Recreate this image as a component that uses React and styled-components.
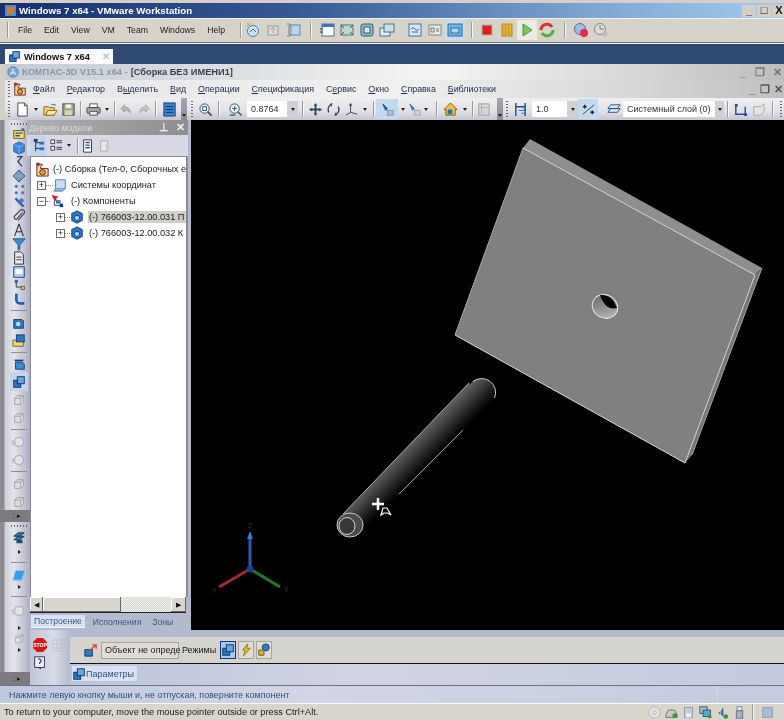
import React from "react";
import styled, { createGlobalStyle } from "styled-components";

const Global = createGlobalStyle`
  html, body { margin: 0; padding: 0; background: #d4d0c8; }
  * { box-sizing: border-box; }
`;

// small 16x16 drawings used by every toolbar
const art = {
  snap: <><circle cx="8" cy="9" r="5.5" fill="#cfe3f4" stroke="#4a7fb0" /><path d="M5 10l3-3 3 3" fill="none" stroke="#3b6ea0" /><path d="M2 1l3 3M5 1L2 4" stroke="#e08a30" /></>,
  snapOff: <><rect x="3" y="4" width="10" height="9" fill="#dcdcdc" stroke="#9a9a9a" /><path d="M5 8l3-3 3 3M8 5v6" fill="none" stroke="#a8a8a8" /></>,
  snapMgr: <><path d="M2 2h3v2H4v8h1v2H2" fill="none" stroke="#777" /><rect x="6" y="3" width="9" height="10" fill="#bcd4ea" stroke="#5d8ab5" /></>,
  win1: <><rect x="3" y="2" width="12" height="12" fill="#fff" stroke="#55717f" /><rect x="3" y="2" width="12" height="3" fill="#3c78b0" /><path d="M1 7h3M1 10h3" stroke="#333" /></>,
  win2: <><rect x="2" y="3" width="12" height="10" fill="#bcd8c8" stroke="#4c7a78" /><path d="M2 3l3 3M14 3l-3 3M2 13l3-3M14 13l-3-3" stroke="#2c5a68" /></>,
  win3: <><rect x="2" y="2" width="12" height="12" rx="2" fill="#8fb8c8" stroke="#38606e" /><rect x="5" y="5" width="6" height="6" fill="#d8e8ee" stroke="#38606e" /></>,
  win4: <><rect x="1" y="6" width="10" height="8" fill="#e4eef4" stroke="#55717f" /><rect x="5" y="2" width="10" height="8" fill="#cfe0ea" stroke="#55717f" /></>,
  wave: <><rect x="2" y="2" width="12" height="12" fill="#dbe8f2" stroke="#3c78b0" /><path d="M4 7q2-3 4 0t4 0M5 10h6" fill="none" stroke="#3a6a90" /></>,
  card: <><rect x="2" y="3" width="12" height="10" fill="#e8e8e4" stroke="#888" /><path d="M4 6h3v4H4zM9 7h3M9 9h3" fill="none" stroke="#777" /></>,
  blueWin: <><rect x="1" y="2" width="14" height="12" fill="#72b4e0" stroke="#2a6ca8" /><rect x="4" y="6" width="8" height="5" fill="#a8d8f0" stroke="#2a6ca8" /></>,
  stop: <rect x="3" y="3" width="10" height="10" fill="#e02020" stroke="#b0b0a0" />,
  pause: <><rect x="3" y="2" width="4" height="12" fill="#e8b020" stroke="#b88a10" /><rect x="9" y="2" width="4" height="12" fill="#e8b020" stroke="#b88a10" /></>,
  play: <path d="M4 2l9 6-9 6z" fill="#78c868" stroke="#4a9a40" />,
  reset: <><path d="M2 8a6 6 0 0 1 11-3" fill="none" stroke="#e03030" strokeWidth="3" /><path d="M14 8a6 6 0 0 1-11 3" fill="none" stroke="#50b040" strokeWidth="3" /></>,
  suspend: <><circle cx="7" cy="7" r="5.5" fill="#9ec0e0" stroke="#4a70a0" /><circle cx="11" cy="11" r="4" fill="#e03048" /></>,
  suspendOff: <><circle cx="7" cy="7" r="5.5" fill="#dcdcdc" stroke="#8a8a8a" /><path d="M7 3v4h4" fill="none" stroke="#777" /><circle cx="12" cy="12" r="2.5" fill="#bbb" /></>,
  doc: <><path d="M3 1h7l3 3v11H3z" fill="#fff" stroke="#444" /><path d="M10 1v3h3" fill="none" stroke="#444" /></>,
  open: <><path d="M1 14V5h5l1 1h5v8z" fill="#f0d070" stroke="#8a6a20" /><path d="M3 14l2-5h10l-3 5z" fill="#f8e8a8" stroke="#8a6a20" /><path d="M9 3q3-2 5 1" fill="none" stroke="#2a6ca8" /></>,
  save: <><rect x="2" y="2" width="12" height="12" fill="#a8a48c" stroke="#4a4a40" /><rect x="5" y="2.5" width="6" height="4" fill="#efefe6" /><rect x="4" y="9" width="8" height="5" fill="#d8d4b8" /></>,
  print: <><rect x="4" y="2" width="8" height="4" fill="#fff" stroke="#555" /><rect x="1" y="6" width="14" height="6" rx="1" fill="#a8a8a8" stroke="#444" /><rect x="4" y="10" width="8" height="4" fill="#eee" stroke="#555" /></>,
  undo: <path d="M6 3L2 7l4 4V8.500q4 0 6 3 0-6-6-6z" fill="#b8b8b8" stroke="#a0a0a0" />,
  redo: <path d="M10 3l4 4-4 4V8.500q-4 0-6 3 0-6 6-6z" fill="#c4c4c4" stroke="#a8a8a8" />,
  panel: <><rect x="2" y="1" width="12" height="14" fill="#3888d0" stroke="#1c3c70" /><path d="M4 5h8M4 8h8M4 11h8" stroke="#0c2c60" /></>,
  zoomBox: <><circle cx="7" cy="7" r="5" fill="#e8f0f8" stroke="#39506a" /><rect x="5" y="5" width="4" height="4" fill="none" stroke="#39506a" /><path d="M10.500 10.500l4 4" stroke="#39506a" strokeWidth="2" /></>,
  zoomIn: <><circle cx="7" cy="7" r="5" fill="#e8f0f8" stroke="#39506a" /><path d="M4.500 7h5M7 4.500v5" stroke="#39506a" /><path d="M2 14h6M10.500 10.500l4 4" stroke="#39506a" strokeWidth="1.500" /></>,
  pan: <path d="M8 1l2 3H9v3h3V6l3 2-3 2V9H9v3h1l-2 3-2-3h1V9H4v1L1 8l3-2v1h3V4H6z" fill="#33475e" />,
  rotate: <><path d="M3 11a6 6 0 0 1 2-8" fill="none" stroke="#33475e" strokeWidth="1.500" /><path d="M13 5a6 6 0 0 1-2 8" fill="none" stroke="#33475e" strokeWidth="1.500" /><path d="M7 1l-3 1 2 3M9 15l3-1-2-3" fill="#33475e" /></>,
  axes: <><path d="M7 2v9l-5 3M7 11l7 2" fill="none" stroke="#33475e" /><path d="M7 1l2 3H5z" fill="#33475e" /></>,
  pick: <><path d="M3 2l5 5-2 2z" fill="#2a5a90" stroke="#2a5a90" /><rect x="8" y="9" width="6" height="5" fill="#aac4d8" stroke="#7a9ab0" /></>,
  pickOff: <><path d="M3 2l5 5-2 2z" fill="#4a78a0" stroke="#4a78a0" /><rect x="8" y="9" width="6" height="5" fill="#d0d0d0" stroke="#aaa" /></>,
  home: <><path d="M8 1L1 8h2v6h10V8h2z" fill="#f0c040" stroke="#8a5a10" /><rect x="5" y="8" width="5" height="5" fill="#2a6cb0" /></>,
  frame: <><rect x="3" y="2" width="11" height="12" fill="#d8d8d8" stroke="#a0a0a0" /><path d="M6 2v12M3 6h11" stroke="#b0b0b0" /></>,
  span: <><path d="M3 1v14M13 1v14M3 5h10" stroke="#2a4a80" strokeWidth="1.500" /><path d="M6 9h7l-2-2M13 12H9" fill="none" stroke="#1878c0" /></>,
  snapLine: <><path d="M2 13L14 3" stroke="#2a4a80" /><path d="M4 3v4M2 5h4M12 9v4M10 11h4" stroke="#223" strokeWidth="1.500" /></>,
  layer: <><path d="M5 3h10l-3 4H2zM5 7h10l-3 4H2z" fill="#dbe8f4" stroke="#2a4a90" /></>,
  poly: <><path d="M3 3v10h10V5" fill="none" stroke="#2a4a90" strokeWidth="1.500" /><path d="M2 2h3v3H2zM12 12h3v3h-3z" fill="#2a4a90" /></>,
  polyOff: <><path d="M3 5h7l4-3v8l-4 4H3z" fill="#e4e4e4" stroke="#aaa" /></>,
  edit: <><rect x="2" y="4" width="12" height="9" fill="#f8d860" stroke="#6a5a20" /><path d="M4 7h8M4 10h5" stroke="#2a5aa0" strokeWidth="1.500" /><path d="M10 2l4-1-1 4" fill="#2a6cc0" /></>,
  cube: <><path d="M8 1l6 3v8l-6 3-6-3V4z" fill="#3a88d8" stroke="#1c5ca0" /><path d="M2 4l6 3 6-3M8 7v8" fill="none" stroke="#86bcec" /></>,
  zig: <path d="M5 2h6L6 8l5 6" fill="none" stroke="#2c3c70" strokeWidth="1.500" />,
  diamond: <><path d="M8 1l7 7-7 7-7-7z" fill="#6aa0d8" stroke="#2c5a90" /><path d="M5 8h6" stroke="#d0a030" strokeWidth="2" /></>,
  dots: <><circle cx="4" cy="4" r="2" fill="#4c7ac0" /><circle cx="12" cy="4" r="2" fill="#4c7ac0" /><circle cx="4" cy="12" r="2" fill="#4c7ac0" /><circle cx="12" cy="12" r="2" fill="#4c7ac0" /></>,
  wrench: <><path d="M3 3l10 10" stroke="#3060c0" strokeWidth="3" /><path d="M9 3a3 3 0 0 1 4 4l-3 2-3-3z" fill="#4c7ac0" /></>,
  clip: <path d="M12 4L6 11a2 2 0 0 1-3-3l7-7a3 3 0 0 1 4 4l-7 8" fill="none" stroke="#445" strokeWidth="1.300" />,
  compass: <path d="M8 1L3 15M8 1l5 14M5 10h6" fill="none" stroke="#334" strokeWidth="1.300" />,
  funnel: <><path d="M1 2h14L9 9v5l-2 1V9z" fill="#3a8ccc" stroke="#1c5c90" /></>,
  sheet: <><path d="M3 1h7l3 3v11H3z" fill="#e8e8ee" stroke="#222" /><path d="M5 7h6M5 10h6" stroke="#333" /></>,
  screen: <><rect x="2" y="2" width="12" height="12" fill="#b0d0f0" stroke="#1c3c70" /><rect x="4" y="5" width="8" height="5" fill="#fff" /></>,
  tree: <><path d="M4 2v8h6" fill="none" stroke="#223" /><rect x="2" y="1" width="4" height="4" fill="#2a6cb0" /><rect x="10" y="9" width="4" height="4" fill="#e0c050" stroke="#555" /></>,
  curve: <path d="M5 2v7a4 4 0 0 0 4 4h5" fill="none" stroke="#1c60b0" strokeWidth="3" />,
  cam: <><path d="M2 4h11v10H2z" fill="#2a78c0" stroke="#123a70" /><circle cx="7" cy="9" r="2.500" fill="#bfe0f8" /><path d="M13 1l2 2-2 2-2-2z" fill="#f4d440" /></>,
  folderCube: <><path d="M1 14V7h12v7z" fill="#f0d870" stroke="#6a5a20" /><rect x="5" y="1" width="9" height="8" fill="#2a78c0" stroke="#123a70" /></>,
  box: <><path d="M3 3h10v2H3z" fill="#123a70" /><path d="M4 6h8l2 2v6H4z" fill="#3a8ccc" stroke="#123a70" /></>,
  cubes: <><rect x="2" y="6" width="8" height="8" fill="#2a78c0" stroke="#0c2c60" /><rect x="6" y="2" width="8" height="8" fill="#60a8e0" stroke="#0c2c60" /></>,
  ghost: <><path d="M3 6h7l3-3v7l-3 3H3z" fill="#dedede" stroke="#a0a0a0" /><path d="M3 6l3-3h7M10 6v7" fill="none" stroke="#a0a0a0" /></>,
  ghostRound: <><rect x="3" y="3" width="10" height="10" rx="4" fill="#e2e2e2" stroke="#a0a0a0" /><path d="M1 6v6" stroke="#a0a0a0" /></>,
  layers: <><path d="M2 6l5-4h7l-5 4zM2 10l5-4h7l-5 4z" fill="#2a80a0" stroke="#103850" /><path d="M5 10h7v4H5z" fill="#1a5070" /></>,
  prism: <path d="M4 4h11l-4 11H1z" fill="#3a9cf0" stroke="#90c8f8" />,
  arrowDoc: <><path d="M2 7h8v7H2z" fill="#3a78c0" stroke="#123a70" /><path d="M7 8l7-6M10 2h4v4" fill="none" stroke="#d05030" strokeWidth="1.500" /></>,
  bolt: <path d="M10 1L4 8h3l-2 7 8-9H9z" fill="#e8c020" stroke="#8a7a10" />,
  gears: <><circle cx="10" cy="5" r="4" fill="#3a78c0" stroke="#123a70" /><path d="M2 8h6v6H2z" fill="#d8a840" stroke="#6a5a20" /></>,
  help: <><rect x="2" y="1" width="11" height="12" fill="#f0f4ff" stroke="#223" /><path d="M6 4q2-1.500 3 .5T7.500 8v1" fill="none" stroke="#1c3c90" strokeWidth="1.300" /><path d="M6 13l3 2v-2" fill="#223" /></>,
  grid: <path d="M1 1h14v14H1zM6 1v14M11 1v14M1 6h14M1 11h14" fill="none" stroke="#c0c0c4" />,
  disc: <><circle cx="8" cy="8" r="7" fill="#e4e4e4" stroke="#aaa" /><circle cx="8" cy="8" r="2" fill="#fff" stroke="#999" /></>,
  logo: <><circle cx="8" cy="8" r="7" fill="#7ea8d0" stroke="#4a78a8" /><path d="M8 3v5l4 3M8 8l-4 3" fill="none" stroke="#e8eef4" strokeWidth="1.500" /></>,
  hdd: <><path d="M1 11l3-6h8l3 6v3H1z" fill="#c8ccc8" stroke="#667" /><circle cx="12" cy="12" r="3" fill="#3a9a3a" /></>,
  floppy: <><rect x="3" y="2" width="10" height="12" fill="#c4ccd8" stroke="#8a94a4" /><rect x="5" y="9" width="6" height="5" fill="#eef" /></>,
  net: <><rect x="1" y="1" width="9" height="8" fill="#a8c0d0" stroke="#345" /><rect x="5" y="5" width="9" height="8" fill="#58a8d0" stroke="#345" /><circle cx="13" cy="13" r="2.500" fill="#3a9a3a" /></>,
  sound: <><path d="M3 9l6-7v11z" fill="#2c5c98" /><path d="M6 13V4" stroke="#e8e8e8" /><circle cx="12" cy="13" r="3" fill="#3a9a3a" /></>,
  usb: <><rect x="5" y="1" width="6" height="5" fill="#e8ecf0" stroke="#778" /><rect x="4" y="6" width="8" height="9" fill="#a8b4c4" stroke="#667" /></>,
  msg: <rect x="2" y="2" width="12" height="12" fill="#a8bcd4" stroke="#8a9ab0" />,
  comp: <><path d="M8 1l6 3v8l-6 3-6-3V4z" fill="#2c72c8" stroke="#103a7a" /><circle cx="8" cy="9" r="3" fill="#9fd4f4" stroke="#103a7a" /></>,
  coord: <><rect x="3" y="2" width="11" height="10" fill="#c8dcf0" stroke="#4a78b0" /><path d="M3 12l-2 3h10l3-3" fill="#9ab8d8" stroke="#4a78b0" /></>,
  group: <><path d="M2 1l8 2-3 2 1 4-4-3z" fill="#d02030" /><rect x="7" y="7" width="5" height="4" fill="#2c72c8" /><rect x="11" y="11" width="4" height="4" fill="#103a7a" /><path d="M5 7v6h6" fill="none" stroke="#334" /></>,
  asm: <><path d="M2 1l6 2-2 2v2h8v8H2z" fill="#f0d8a0" stroke="#6a2020" /><circle cx="8" cy="11" r="3" fill="#e8a020" stroke="#6a2020" /><path d="M1 1l5 1-3 3z" fill="#c02020" /></>,
  treeMode: <><path d="M5 1v13M5 5h5M5 11h5" stroke="#223" /><rect x="3" y="1" width="4" height="3" fill="#334" /><rect x="9" y="4" width="5" height="3" fill="#2c72c8" /><rect x="9" y="10" width="5" height="3" fill="#2c72c8" /></>,
  listMode: <><path d="M2 2h4v4H2zM2 9h4v4H2z" fill="#fff" stroke="#334" /><path d="M8 3h6M8 5h6M8 10h6M8 12h6" stroke="#334" /></>,
  struct: <><path d="M3 1h9v14H3z" fill="#fff" stroke="#223" /><path d="M5 4h5M5 7h5M5 10h5" stroke="#2a5a90" strokeWidth="1.500" /></>,
  structOff: <><path d="M3 2h8v12H3z" fill="#e8e8e8" stroke="#aaa" /><path d="M9 5l5 4-5 4z" fill="#ccc" /></>,
};

const IconSvg = styled.svg`
  display: block;
  flex: none;
`;

const Icon = ({ name, size = 16 }) => (
  <IconSvg viewBox="0 0 16 16" width={size} height={size}>
    {art[name]}
  </IconSvg>
);

const Page = styled.div`
  width: 784px;
  height: 720px;
  overflow: hidden;
  display: flex;
  flex-direction: column;
  background: #d4d0c8;
  font-family: "Liberation Sans", Arial, sans-serif;
  filter: blur(0.3px);
`;

/* ---- VMware chrome ---- */
const VmTitle = styled.div`
  height: 15px;
  margin-top: 3px;
  flex: none;
  display: flex;
  align-items: center;
  padding-left: 5px;
  background: linear-gradient(90deg, #14306e 0%, #3a5c98 40%, #7ea4d2 75%, #a6caf0 100%);
  color: #fff;
  font-size: 9.700px;
  font-weight: bold;
`;

const VmLogo = styled.span`
  width: 11px;
  height: 11px;
  margin-right: 3px;
  border: 2px solid #5a8ab0;
  background: #d87a30;
`;

const WinButtons = styled.div`
  margin-left: auto;
  margin-right: ${(p) => p.$mr || 0}px;
  display: flex;
  gap: ${(p) => p.$gap || 1}px;
`;

const WinButton = styled.span`
  width: ${(p) => p.$w || 14}px;
  height: 12px;
  display: flex;
  align-items: center;
  justify-content: center;
  background: ${(p) => p.$bg || "#d4d0c8"};
  color: ${(p) => p.$fg || "#111"};
  font-size: 11px;
  font-weight: bold;
  line-height: 1;
`;

const VmBar = styled.div`
  height: 25px;
  flex: none;
  display: flex;
  align-items: center;
  padding-left: 6px;
  background: #d6d3ca;
  border-bottom: 1px solid #77756e;
  box-shadow: inset 0 1px 0 #f4f2ec;
  color: #222;
  font-size: 8.700px;
`;

const VmMenu = styled.div`
  width: 219px;
  margin-left: 9px;
  flex: none;
  display: flex;
  gap: 12px;
`;

const Sep = styled.span`
  flex: none;
  width: ${(p) => p.$w || 6}px;
  height: 16px;
  display: flex;
  justify-content: center;
  &::before {
    content: "";
    width: 1px;
    background: #9c9a94;
    box-shadow: 1px 0 0 #f6f6f2;
  }
`;

const Slot = styled.span`
  flex: none;
  width: ${(p) => p.$w || 20}px;
  height: ${(p) => p.$h || 20}px;
  display: flex;
  align-items: center;
  justify-content: center;
  background: ${(p) => (p.$on ? p.$on : "transparent")};
`;

const VmTabs = styled.div`
  height: 21px;
  flex: none;
  padding: 5px 0 0 5px;
  background: #2e4a72;
  border-top: 1px solid #f0f0f0;
`;

const VmTab = styled.div`
  width: 108px;
  height: 15px;
  display: flex;
  align-items: center;
  gap: 3px;
  padding-left: 3px;
  background: #fbfbfb;
  font-size: 9.200px;
  font-weight: bold;
  white-space: nowrap;
  color: #111;
`;

const TabClose = styled.span`
  margin-left: auto;
  margin-right: 3px;
  color: #c4c4c4;
  font-size: 10px;
`;

const VmStatus = styled.div`
  height: 17px;
  flex: none;
  display: flex;
  align-items: center;
  padding-left: 4px;
  background: #d8d6cc;
  border-top: 1px solid #fbfbf6;
  color: #1a1a1a;
  font-size: 9.200px;
`;

const TrayIcons = styled.div`
  margin-left: auto;
  display: flex;
  align-items: center;
`;

/* ---- KOMPAS window ---- */
const Window = styled.div`
  flex: 1;
  min-height: 0;
  margin-left: 5px;
  display: flex;
  flex-direction: column;
`;

const KTitle = styled.div`
  height: 16px;
  flex: none;
  display: flex;
  align-items: center;
  padding-left: 2px;
  background: linear-gradient(90deg, #c4ccd6 0%, #d8dce0 25%, #f4f4f4 55%, #d8d8d8 80%, #bdbdbd 100%);
  color: #8e949c;
  font-size: 9.250px;
  font-weight: bold;
  gap: 3px;
  b {
    color: #3a3f4c;
  }
`;

const KMenu = styled.div`
  height: 18px;
  flex: none;
  display: flex;
  align-items: center;
  background: linear-gradient(90deg, #e6e6e8 0%, #f0f0f0 50%, #d8d8d8 80%, #c0c0c0 100%);
  color: #24324e;
  font-size: 8.900px;
`;

const KMenuList = styled.div`
  margin-left: 6px;
  display: flex;
  gap: 12px;
  u {
    text-decoration: underline;
  }
`;

const KToolbar = styled.div`
  height: 22px;
  flex: none;
  display: flex;
  align-items: center;
  background: linear-gradient(180deg, #f0f0f2 0%, #e0e0e6 60%, #c6c6d2 100%);
`;

const Grip = styled.span`
  flex: none;
  width: ${(p) => p.$w || 8}px;
  height: 16px;
  display: flex;
  justify-content: center;
  &::before {
    content: "";
    width: 2px;
    background: repeating-linear-gradient(180deg, #6a6a70 0 1px, transparent 1px 3px);
  }
`;

const Band = styled.span`
  flex: none;
  width: 6px;
  height: 22px;
  padding-bottom: 3px;
  display: flex;
  align-items: flex-end;
  justify-content: center;
  background: linear-gradient(180deg, #a8a8b4, #8a8a94);
  &::before {
    content: "";
    border-top: 3px solid #222;
    border-left: 2px solid transparent;
    border-right: 2px solid transparent;
  }
`;

const Arrow = styled.span`
  flex: none;
  width: ${(p) => p.$w || 10}px;
  display: flex;
  justify-content: center;
  &::before {
    content: "";
    border-top: 3px solid #222;
    border-left: 2.500px solid transparent;
    border-right: 2.500px solid transparent;
  }
`;

const Field = styled.span`
  flex: none;
  width: ${(p) => p.$w}px;
  height: 16px;
  padding-left: 4px;
  display: flex;
  align-items: center;
  white-space: nowrap;
  background: #fff;
  color: #333;
  font-size: 9px;
`;

const FieldDrop = styled(Arrow)`
  height: 16px;
  align-items: center;
  background: #d0d0d4;
`;

const Gap = styled.span`
  flex: none;
  width: ${(p) => p.$w}px;
`;

const Body = styled.div`
  flex: 1;
  min-height: 0;
  display: flex;
  margin-left: -5px;
`;

const SideTools = styled.div`
  width: 30px;
  flex: none;
  display: flex;
  flex-direction: column;
  align-items: center;
  padding-left: 8px;
  background: linear-gradient(90deg, #8a8a90 0, #8a8a90 4px, #d0d0da 5px, #e4e4ea 14px, #c0c0d0 25px, #a8aec4 30px);
`;

const SideItem = styled.span`
  flex: none;
  width: 18px;
  height: ${(p) => p.$h}px;
  display: flex;
  align-items: center;
  justify-content: center;
  background: ${(p) => (p.$on ? "#c4d4ec" : "transparent")};
`;

const SideSep = styled.span`
  flex: none;
  height: ${(p) => p.$h}px;
  width: 16px;
  display: flex;
  align-items: center;
  &::before {
    content: "";
    flex: 1;
    height: 1px;
    background: #8e8e9a;
  }
`;

const SideBand = styled.span`
  flex: none;
  height: ${(p) => p.$h}px;
  width: 30px;
  margin-left: -8px;
  padding-left: 13px;
  display: flex;
  align-items: center;
  background: #7c7c80;
  color: #111;
  font-size: 7px;
`;

const SideDots = styled.span`
  flex: none;
  height: ${(p) => p.$h}px;
  width: 16px;
  display: flex;
  align-items: center;
  &::before {
    content: "";
    flex: 1;
    height: 2px;
    background: repeating-linear-gradient(90deg, #666 0 1px, transparent 1px 3px);
  }
`;

const SideArrow = styled(Arrow)`
  height: ${(p) => p.$h}px;
  align-items: center;
  &::before {
    border-top: 2.500px solid transparent;
    border-bottom: 2.500px solid transparent;
    border-left: 3px solid #222;
    border-right: 0;
  }
`;

const Right = styled.div`
  flex: 1;
  min-width: 0;
  display: flex;
  flex-direction: column;
`;

const Work = styled.div`
  height: 510px;
  flex: none;
  display: flex;
  background: #b4bace;
`;

const TreePanel = styled.div`
  width: 158px;
  flex: none;
  display: flex;
  flex-direction: column;
`;

const PanelHead = styled.div`
  height: 15px;
  flex: none;
  margin-left: -3px;
  display: flex;
  align-items: center;
  padding: 0 1px 0 2px;
  background: linear-gradient(90deg, #b0b0b0, #8e8e8e);
  color: #dcdcdc;
  font-size: 8.800px;
`;

const PanelTool = styled.div`
  height: 21px;
  flex: none;
  margin-left: -3px;
  display: flex;
  align-items: center;
  padding-left: 3px;
  background: #d9d9e6;
`;

const Tree = styled.div`
  flex: 1;
  min-height: 0;
  padding-top: 4px;
  background: #fff;
  border-left: 1px solid #8a8a96;
  border-top: 1px solid #8a8a96;
  border-right: 2px solid #8a8a96;
  overflow: hidden;
  font-size: 9.200px;
  color: #1b1b1b;
`;

const Row = styled.div`
  height: 16px;
  display: flex;
  align-items: center;
  padding-left: ${(p) => p.$indent}px;
  white-space: nowrap;
`;

const Expander = styled.span`
  flex: none;
  width: 9px;
  height: 9px;
  border: 1px solid #6e6e6e;
  background: #fff;
  display: flex;
  align-items: center;
  justify-content: center;
  color: #111;
  font-size: 9px;
  line-height: 1;
`;

const Dash = styled.span`
  flex: none;
  width: ${(p) => p.$w}px;
  border-top: 1px dotted #888;
`;

const RowText = styled.span`
  margin-left: ${(p) => p.$ml || 3}px;
  padding: 1px 0 1px 1px;
  flex: ${(p) => (p.$on ? 1 : "none")};
  background: ${(p) => (p.$on ? "#cfcfc8" : "transparent")};
`;

const Scroll = styled.div`
  height: 16px;
  flex: none;
  display: flex;
  background: repeating-conic-gradient(#f4f4f0 0 25%, #d0d0cc 0 50%) 0 0 / 2px 2px;
  border-bottom: 1px solid #222;
  margin-right: 2px;
`;

const ScrollBtn = styled.span`
  flex: none;
  width: ${(p) => p.$w}px;
  display: flex;
  align-items: center;
  justify-content: center;
  background: #d8d6ce;
  box-shadow: inset -1px -1px 0 #666, inset 1px 1px 0 #fff;
  color: #111;
  font-size: 7px;
`;

const ScrollGap = styled.span`
  flex: 1;
`;

const TabRow = styled.div`
  height: 17px;
  flex: none;
  display: flex;
  align-items: center;
  padding-left: 1px;
  white-space: nowrap;
  color: #3e5680;
  font-size: 8.600px;
`;

const SheetTab = styled.span`
  padding: 1px 3px;
  margin-right: 5px;
  background: ${(p) => (p.$on ? "#d8e2f2" : "transparent")};
  border-bottom: ${(p) => (p.$on ? "1px solid #f2f6fc" : "0")};
`;

const Viewport = styled.div`
  flex: none;
  width: 593px;
  height: 510px;
  margin-left: 3px;
  background: #000;
`;

const Scene = styled.svg`
  display: block;
`;

const Props = styled.div`
  height: 55px;
  flex: none;
  display: flex;
  background: #b4bace;
`;

const PropSide = styled.div`
  width: 40px;
  flex: none;
  padding: 6px 0 0 1px;
  display: grid;
  grid-template-columns: 18px 18px;
  grid-auto-rows: 18px;
  background: linear-gradient(90deg, #c0c4d6, #d8dce8 60%, #b4bace);
`;

const PropMain = styled.div`
  flex: 1;
  display: flex;
  flex-direction: column;
  padding-top: 7px;
`;

const PropTop = styled.div`
  height: 27px;
  flex: none;
  display: flex;
  align-items: center;
  padding-left: 13px;
  background: #d4d3cd;
  border-bottom: 1px solid #111;
  font-size: 9px;
  color: #222;
`;

const ObjField = styled.span`
  width: 78px;
  height: 17px;
  margin: 0 3px;
  padding-left: 3px;
  display: flex;
  align-items: center;
  white-space: nowrap;
  border: 1px solid #a8a69c;
  background: #dedcd4;
`;

const ModeBtn = styled.span`
  flex: none;
  width: 16px;
  height: 18px;
  margin-left: ${(p) => p.$ml || 2}px;
  display: flex;
  align-items: center;
  justify-content: center;
  border: 1px solid ${(p) => (p.$on ? "#103a7a" : "#a8a69c")};
  background: ${(p) => (p.$on ? "#a8c8ec" : "#dedcd4")};
`;

const PropTabs = styled.div`
  flex: 1;
  padding: 2px 0 0 2px;
  background: linear-gradient(90deg, #bcc4da, #d0d4e4 40%, #c4cadc);
  display: flex;
  align-items: flex-start;
`;

const PropTab = styled.span`
  display: flex;
  align-items: center;
  height: 15px;
  padding-right: 3px;
  background: #d8e2f2;
  color: #33507c;
  font-size: 9px;
`;

const Hint = styled.div`
  height: 18px;
  flex: none;
  margin-left: -5px;
  display: flex;
  align-items: center;
  padding-left: 9px;
  border-top: 1px solid #6e7488;
  background: linear-gradient(90deg, #c0c8de, #d2d6e6 40%, #c6cce0 91.400%, #eeeef4 91.400%, #c6cce0 91.600%);
  color: #33507c;
  font-size: 9px;
`;

const sideItems = [
  ["dots", 7], ["edit", 14], ["cube", 14], ["zig", 13], ["diamond", 15], ["dots4", 13], ["wrench", 13],
  ["clip", 14], ["compass", 14], ["funnel", 14], ["sheet", 14], ["screen", 14], ["tree", 13], ["curve", 14],
  ["sep", 8], ["cam", 18], ["folderCube", 17], ["sep", 6], ["box", 17], ["cubes", 19, "on"],
  ["ghost", 18], ["ghost", 17], ["sep", 7], ["ghostRound", 18], ["ghostRound", 17], ["sep", 7],
  ["ghost", 18], ["ghost", 17], ["band", 12], ["dots", 8], ["layers", 16], ["arrow", 12], ["sep", 8],
  ["prism", 16], ["arrow", 10], ["sep", 8], ["ghostRound", 22], ["arrow", 11], ["ghost", 12], ["arrow", 10],
  ["gap", 17], ["band", 13],
];

const SideEntry = ({ item }) => {
  const [kind, h, on] = item;
  if (kind === "dots") return <SideDots $h={h} />;
  if (kind === "sep") return <SideSep $h={h} />;
  if (kind === "arrow") return <SideArrow $h={h} />;
  if (kind === "band") return <SideBand $h={h}>: ▸</SideBand>;
  if (kind === "gap") return <SideItem $h={h} />;
  return (
    <SideItem $h={h} $on={on}>
      <Icon name={kind === "dots4" ? "dots" : kind} size={Math.min(14, h)} />
    </SideItem>
  );
};

const vmMenu = ["File", "Edit", "View", "VM", "Team", "Windows", "Help"];

const kMenu = [
  <><u>Ф</u>айл</>,
  <><u>Р</u>едактор</>,
  <>В<u>ы</u>делить</>,
  <><u>В</u>ид</>,
  <><u>О</u>перации</>,
  <><u>С</u>пецификация</>,
  <>С<u>е</u>рвис</>,
  <><u>О</u>кно</>,
  <><u>С</u>правка</>,
  <><u>Б</u>иблиотеки</>,
];

// kind, width, extra
const kTools = [
  ["gap", 1], ["grip", 5], ["gap", 2],
  ["doc", 18], ["arrow", 10], ["open", 18], ["save", 18], ["sep", 6], ["print", 20], ["arrow", 8], ["sep", 6],
  ["undo", 18], ["redo", 16], ["sep", 9], ["panel", 18], ["gap", 3], ["band"], ["grip", 10],
  ["zoomBox", 16], ["sep", 10], ["zoomIn", 24], ["field", 40, "0.8764"], ["drop", 11], ["sep", 8],
  ["pan", 18], ["rotate", 18], ["axes", 18], ["arrow", 10], ["sep", 6], ["pick", 22, "on"], ["arrow", 10],
  ["pickOff", 12], ["arrow", 12], ["sep", 8], ["home", 20], ["arrow", 10], ["sep", 4], ["frame", 18],
  ["gap", 5], ["band"], ["grip", 8], ["span", 18], ["gap", 3], ["field", 35, "1.0"], ["drop", 11],
  ["snapLine", 20, "on"], ["gap", 6], ["layer", 18], ["gap", 1], ["field", 92, "Системный слой (0)"], ["drop", 9],
  ["sep", 7], ["poly", 18], ["polyOff", 18], ["sep", 10], ["grip", 7],
];

const ToolEntry = ({ tool }) => {
  const [kind, w, extra] = tool;
  if (kind === "gap") return <Gap $w={w} />;
  if (kind === "grip") return <Grip $w={w} />;
  if (kind === "sep") return <Sep $w={w} />;
  if (kind === "band") return <Band />;
  if (kind === "arrow") return <Arrow $w={w} />;
  if (kind === "field") return <Field $w={w}>{extra}</Field>;
  if (kind === "drop") return <FieldDrop $w={w} />;
  return (
    <Slot $w={w} $on={extra ? "#c4d8ee" : ""}>
      <Icon name={kind} size={15} />
    </Slot>
  );
};

const vmTools = [
  ["snap"], ["snapOff"], ["snapMgr"], ["sep", 14], ["win1"], ["win2"], ["win3"], ["win4"], ["gap", 8],
  ["wave"], ["card"], ["blueWin", "#c8dcf0"], ["sep", 12],
  ["stop"], ["pause"], ["play", "#ecebe4"], ["reset"], ["sep", 14], ["suspend"], ["suspendOff"],
];

const Model = () => (
  <Scene width="593" height="510" viewBox="191 120 593 510">
    <defs>
      <linearGradient id="pin" gradientUnits="userSpaceOnUse" x1="406" y1="449" x2="425" y2="468">
        <stop offset="0" stopColor="#5c5c5c" />
        <stop offset="0.5" stopColor="#303030" />
        <stop offset="1" stopColor="#000" />
      </linearGradient>
      <linearGradient id="bore" x1="0" y1="0" x2="1" y2="1">
        <stop offset="0" stopColor="#606060" />
        <stop offset="1" stopColor="#c0c0c0" />
      </linearGradient>
    </defs>

    <polygon points="530,139 762,268 755,275 523,148" fill="#8e8e8e" />
    <polygon points="523,148 755,275 685,463 455,335" fill="#808080" />
    <polygon points="762,268 692,455 685,463 755,275" fill="#767676" />
    <path d="M523 148L755 275M755 275L685 463M455 335L685 463" stroke="#d8d8d8" fill="none" />
    <path d="M523 148L455 335" stroke="#a8a8a8" fill="none" />
    <path d="M762 268L692 455" stroke="#a0a0a0" fill="none" />
    <ellipse cx="605" cy="306.500" rx="13" ry="11.500" transform="rotate(28 605 306.500)" fill="url(#bore)" stroke="#e8e8e8" />
    <path d="M600 295Q612 294 617 308Q608 310 604 303Q601 299 600 295z" fill="#000" />

    <polygon points="343,514 469,383 491,403 360,535" fill="url(#pin)" />
    <circle cx="481" cy="393" r="14" fill="url(#pin)" />
    <path d="M343 514L469 383" stroke="#a8a8a8" fill="none" />
    <path d="M399 494L463 430" stroke="#a0a0a0" fill="none" />
    <path d="M473 381.500A14 14 0 0 1 494.500 398" stroke="#c8d4d4" fill="none" />
    <ellipse cx="350" cy="525" rx="13" ry="12" fill="#4a4a4a" stroke="#b8d0d0" />
    <ellipse cx="347" cy="526" rx="8" ry="8.500" fill="#383838" stroke="#d0d0d0" />

    <path d="M378 498v12M372 504h12" stroke="#fff" strokeWidth="2.500" />
    <path d="M381 515l2-7h4l4 7-3-2h-4z" fill="#000" stroke="#fff" strokeWidth="1.200" />

    <path d="M250 569V536" stroke="#2a5aa8" strokeWidth="3" />
    <path d="M250 531l3 8h-6z" fill="#3a78c8" />
    <path d="M250 569L219 587" stroke="#a02838" strokeWidth="3" />
    <path d="M250 569L280 587" stroke="#1c7a30" strokeWidth="3" />
    <circle cx="250" cy="569" r="3.500" fill="#1c3c98" />
    <text x="248" y="528" fill="#333" fontSize="7">Z</text>
    <text x="212" y="593" fill="#4a2020" fontSize="7">X</text>
    <text x="284" y="592" fill="#333" fontSize="7">Y</text>
  </Scene>
);

export default function App() {
  return (
    <Page>
      <Global />
      <VmTitle>
        <VmLogo />
        Windows 7 x64 - VMware Workstation
        <WinButtons $mr={-2}>
          <WinButton>_</WinButton>
          <WinButton>□</WinButton>
          <WinButton>X</WinButton>
        </WinButtons>
      </VmTitle>
      <VmBar>
        <Sep $w={3} />
        <VmMenu>
          {vmMenu.map((label) => (
            <span key={label}>{label}</span>
          ))}
        </VmMenu>
        <Sep />
        {vmTools.map((t, i) =>
          t[0] === "sep" ? (
            <Sep key={i} $w={t[1]} />
          ) : t[0] === "gap" ? (
            <Gap key={i} $w={t[1]} />
          ) : (
            <Slot key={i} $on={t[1]}>
              <Icon name={t[0]} />
            </Slot>
          )
        )}
      </VmBar>
      <VmTabs>
        <VmTab>
          <Icon name="cubes" size={13} />
          Windows 7 x64
          <TabClose>✕</TabClose>
        </VmTab>
      </VmTabs>

      <Window>
        <KTitle>
          <Icon name="logo" size={12} />
          КОМПАС-3D V15.1 x64 - <b>[Сборка БЕЗ ИМЕНИ1]</b>
          <WinButtons $gap={3}>
            <WinButton $bg="transparent" $fg="#777">_</WinButton>
            <WinButton $bg="transparent" $fg="#777">❐</WinButton>
            <WinButton $bg="transparent" $fg="#777">✕</WinButton>
          </WinButtons>
        </KTitle>
        <KMenu>
          <Gap $w={1} />
          <Grip $w={5} />
          <Gap $w={2} />
          <Icon name="asm" size={14} />
          <KMenuList>
            {kMenu.map((label, i) => (
              <span key={i}>{label}</span>
            ))}
          </KMenuList>
          <WinButtons>
            <WinButton $w={12} $bg="transparent" $fg="#555">_</WinButton>
            <WinButton $w={12} $bg="transparent" $fg="#555">❐</WinButton>
            <WinButton $w={12} $bg="transparent" $fg="#555">✕</WinButton>
          </WinButtons>
        </KMenu>
        <KToolbar>
          {kTools.map((t, i) => (
            <ToolEntry key={i} tool={t} />
          ))}
        </KToolbar>

        <Body>
          <SideTools>
            {sideItems.map((it, i) => (
              <SideEntry key={i} item={it} />
            ))}
          </SideTools>
          <Right>
            <Work>
              <TreePanel>
                <PanelHead>
                  Дерево модели
                  <WinButtons $gap={2}>
                    <WinButton $bg="transparent" $fg="#eee">⊥</WinButton>
                    <WinButton $bg="transparent" $fg="#eee">✕</WinButton>
                  </WinButtons>
                </PanelHead>
                <PanelTool>
                  <Slot $w={16} $on="#c4d4ec"><Icon name="treeMode" size={15} /></Slot>
                  <Gap $w={3} />
                  <Icon name="listMode" size={15} />
                  <Arrow $w={9} />
                  <Sep $w={8} />
                  <Icon name="struct" size={14} />
                  <Gap $w={3} />
                  <Icon name="structOff" size={14} />
                </PanelTool>
                <Tree>
                  <Row $indent={4}>
                    <Icon name="asm" size={15} />
                    <RowText $ml={2}>(-) Сборка (Тел-0, Сборочных е</RowText>
                  </Row>
                  <Row $indent={6}>
                    <Expander>+</Expander>
                    <Dash $w={7} />
                    <Icon name="coord" size={14} />
                    <RowText $ml={3}>Системы координат</RowText>
                  </Row>
                  <Row $indent={6}>
                    <Expander>−</Expander>
                    <Dash $w={4} />
                    <Icon name="group" size={14} />
                    <RowText $ml={6}>(-) Компоненты</RowText>
                  </Row>
                  <Row $indent={25}>
                    <Expander>+</Expander>
                    <Dash $w={5} />
                    <Icon name="comp" size={14} />
                    <RowText $ml={4} $on>(-) 766003-12.00.031 П</RowText>
                  </Row>
                  <Row $indent={25}>
                    <Expander>+</Expander>
                    <Dash $w={5} />
                    <Icon name="comp" size={14} />
                    <RowText $ml={4}>(-) 766003-12.00.032 К</RowText>
                  </Row>
                </Tree>
                <Scroll>
                  <ScrollBtn $w={13}>◀</ScrollBtn>
                  <ScrollBtn $w={78} />
                  <ScrollGap />
                  <ScrollBtn $w={15}>▶</ScrollBtn>
                </Scroll>
                <TabRow>
                  <SheetTab $on>Построение</SheetTab>
                  <SheetTab>Исполнения</SheetTab>
                  <SheetTab>Зоны</SheetTab>
                </TabRow>
              </TreePanel>
              <Viewport>
                <Model />
              </Viewport>
            </Work>
            <Props>
              <PropSide>
                <Slot $w={18} $h={18}>
                  <svg width="14" height="14" viewBox="0 0 14 14">
                    <polygon points="4,0 10,0 14,4 14,10 10,14 4,14 0,10 0,4" fill="#d81818" />
                    <text x="7" y="9" fontSize="5" fontWeight="bold" textAnchor="middle" fill="#fff" fontFamily="Liberation Sans">STOP</text>
                  </svg>
                </Slot>
                <Slot $w={18} $h={18}><Icon name="grid" size={13} /></Slot>
                <Slot $w={18} $h={18}><Icon name="help" size={14} /></Slot>
              </PropSide>
              <PropMain>
                <PropTop>
                  <Icon name="arrowDoc" size={15} />
                  <ObjField>Объект не опреде</ObjField>
                  Режимы
                  <ModeBtn $on $ml={4}><Icon name="cubes" size={14} /></ModeBtn>
                  <ModeBtn><Icon name="bolt" size={14} /></ModeBtn>
                  <ModeBtn><Icon name="gears" size={14} /></ModeBtn>
                </PropTop>
                <PropTabs>
                  <PropTab>
                    <Icon name="cubes" size={14} />
                    Параметры
                  </PropTab>
                </PropTabs>
              </PropMain>
            </Props>
          </Right>
        </Body>
        <Hint>Нажмите левую кнопку мыши и, не отпуская, поверните компонент</Hint>
      </Window>

      <VmStatus>
        To return to your computer, move the mouse pointer outside or press Ctrl+Alt.
        <TrayIcons>
          <Slot $w={17} $h={14}><Icon name="disc" size={13} /></Slot>
          <Slot $w={17} $h={14}><Icon name="hdd" size={13} /></Slot>
          <Slot $w={17} $h={14}><Icon name="floppy" size={13} /></Slot>
          <Slot $w={17} $h={14}><Icon name="net" size={13} /></Slot>
          <Slot $w={17} $h={14}><Icon name="sound" size={13} /></Slot>
          <Slot $w={17} $h={14}><Icon name="usb" size={13} /></Slot>
          <Sep $w={9} />
          <Slot $w={20} $h={14}><Icon name="msg" size={13} /></Slot>
          <Gap $w={7} />
        </TrayIcons>
      </VmStatus>
    </Page>
  );
}
